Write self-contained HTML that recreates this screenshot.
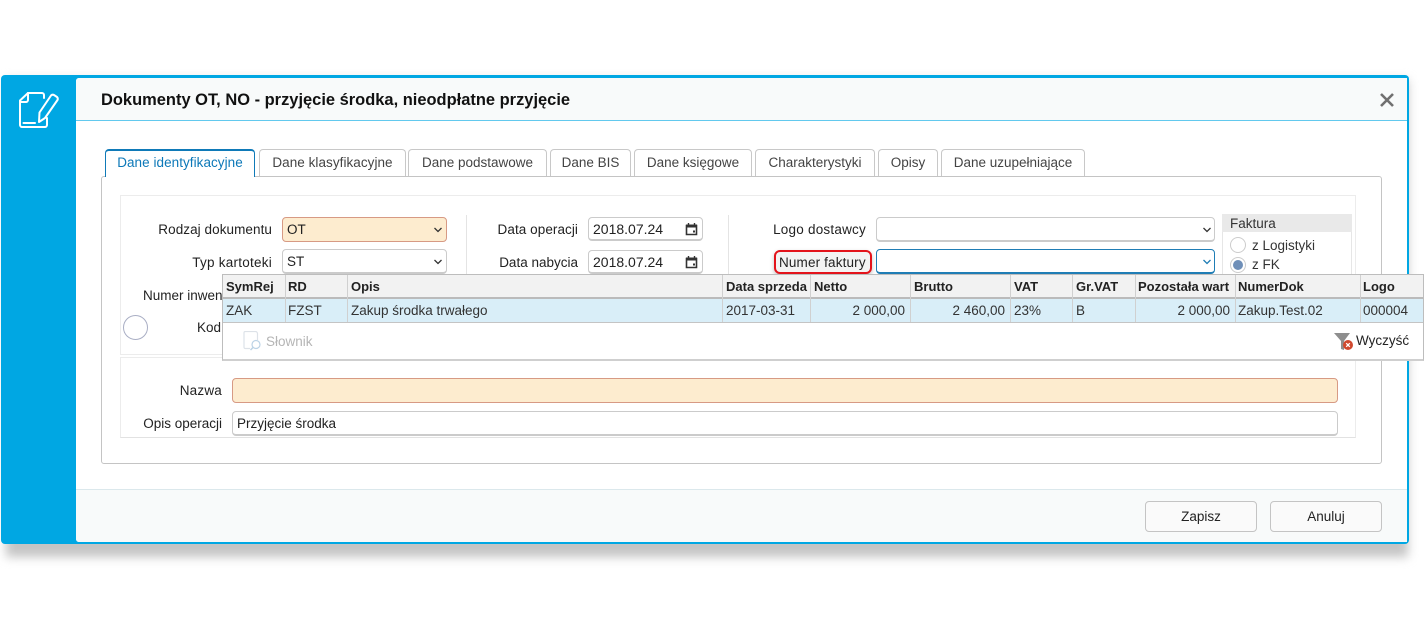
<!DOCTYPE html>
<html lang="pl"><head><meta charset="utf-8"><title>Dokumenty OT, NO</title>
<style>
html,body{margin:0;padding:0;background:#fff}
body{width:1424px;height:629px;position:relative;overflow:hidden;font-family:"Liberation Sans",sans-serif;font-size:13.5px;color:#222}
div,span,svg{position:absolute;box-sizing:border-box}
.t{white-space:nowrap;line-height:16px}
.r{text-align:right}
.tab{top:149px;height:27px;border:1px solid #c8c8c8;border-bottom:0;border-radius:4px 4px 0 0;background:#fff;color:#444;text-align:center;line-height:26px;white-space:nowrap}
.in{height:25px;background:#fff;border:1px solid #cbcbcb;border-bottom:2px solid #cbcbcb;border-radius:4px;padding-left:4px;line-height:23px;white-space:nowrap;color:#222}
.o{background:#fdeccf;border:1px solid #d79a84}
.ch{width:10px;height:6px}
.h{top:276px;height:22px;line-height:22px;padding-left:3px;font-weight:bold;color:#222;white-space:nowrap;overflow:hidden;font-size:13px}
.c{top:299px;height:23px;line-height:23px;padding:0 3px;white-space:nowrap;color:#333;font-size:13.5px}
.s{width:1px;background:#d0d0d0}
</style></head><body>
<div style="left:6px;top:80px;width:1402px;height:477px;background:#c4c4c4;filter:blur(5px)"></div>
<div style="left:1px;top:75px;width:1408px;height:469px;background:#00a7e3;border-radius:4px"></div>
<div style="left:76px;top:78px;width:1331px;height:464px;background:#fff;border-radius:3px 0 0 3px"></div>
<div style="left:76px;top:78px;width:1331px;height:43px;background:#f8fafa;border-bottom:1px solid #62c9ee;border-radius:3px 0 0 0"></div>
<div class="t" style="left:101px;top:90px;font-size:16.47px;line-height:20px;font-weight:bold;color:#111">Dokumenty OT, NO - przyjęcie środka, nieodpłatne przyjęcie</div>
<svg style="left:1379px;top:92px" width="16" height="16" viewBox="0 0 16 16"><path d="M2 2L14 14M14 2L2 14" stroke="#707070" stroke-width="2.600" fill="none"/></svg>
<svg style="left:16px;top:90px" width="44" height="40" viewBox="16 90 44 40" fill="none" stroke="#fff" stroke-width="2" stroke-linejoin="round" stroke-linecap="round"><path d="M28 93H42C43 93 44 94 44 95V98"/><path d="M28 93L20 100.500V125C20 126 21 127 22 127H45C46 127 47 126 47 125V118"/><path d="M28 93V100C28 101 27 102 26 102H20"/><path d="M23.500 123H35"/><path d="M39 122L39.500 112.500L51 95.500C52 94.500 53 94.500 54 95L57 97C58 98 58 99 57.500 100L45 118Z"/></svg>

<div style="left:76px;top:489px;width:1331px;height:53px;background:#f8fafa;border-top:1px solid #dbe8ec;border-radius:0 0 0 3px"></div>
<div class="tab" style="left:1145px;top:501px;width:112px;height:31px;border:1px solid #c4c4c4;border-radius:4px;background:#fafafa;color:#222;line-height:29px">Zapisz</div>
<div class="tab" style="left:1270px;top:501px;width:112px;height:31px;border:1px solid #c4c4c4;border-radius:4px;background:#fafafa;color:#222;line-height:29px">Anuluj</div>

<div style="left:101px;top:176px;width:1281px;height:288px;border:1px solid #c4c4c4;border-radius:3px;background:#fff"></div>
<div class="tab" style="left:105px;width:150px;height:28px;border:1px solid #0f7ab8;border-top-width:2px;border-bottom:0;color:#0c78b8;line-height:24px;z-index:2;letter-spacing:.05px">Dane identyfikacyjne</div>
<div class="tab" style="left:259px;width:147px;letter-spacing:.05px">Dane klasyfikacyjne</div>
<div class="tab" style="left:408px;width:139px">Dane podstawowe</div>
<div class="tab" style="left:550px;width:81px">Dane BIS</div>
<div class="tab" style="left:634px;width:118px">Dane księgowe</div>
<div class="tab" style="left:755px;width:120px">Charakterystyki</div>
<div class="tab" style="left:878px;width:60px">Opisy</div>
<div class="tab" style="left:941px;width:144px">Dane uzupełniające</div>

<div style="left:120px;top:195px;width:1236px;height:160px;border:1px solid #ececec"></div>
<div style="left:120px;top:357px;width:1236px;height:81px;border:1px solid #ececec;border-bottom-color:#e2e2e2"></div>
<div style="left:466px;top:215px;width:1px;height:60px;background:#e4e4e4"></div>
<div style="left:728px;top:215px;width:1px;height:60px;background:#e4e4e4"></div>

<div class="t r" style="right:1152px;top:222px;letter-spacing:.07px">Rodzaj dokumentu</div>
<div class="t r" style="right:1152px;top:255px;letter-spacing:.25px">Typ kartoteki</div>
<div class="t" style="left:143px;top:288px">Numer inwen</div>
<div class="t" style="left:197px;top:320px">Kod</div>
<div style="left:123px;top:315px;width:25px;height:25px;border:1px solid #a9aec4;border-radius:50%;background:#fff"></div>
<div class="in o" style="left:282px;top:217px;width:165px">OT</div>
<div class="in" style="left:282px;top:249px;width:165px">ST</div>
<svg class="ch" style="left:433px;top:227px" viewBox="0 0 10 6"><path d="M1.500 1L5 4.500L8.500 1" stroke="#333" stroke-width="1.300" fill="none"/></svg>
<svg class="ch" style="left:433px;top:259px" viewBox="0 0 10 6"><path d="M1.500 1L5 4.500L8.500 1" stroke="#333" stroke-width="1.300" fill="none"/></svg>

<div class="t r" style="right:846px;top:222px;letter-spacing:.07px">Data operacji</div>
<div class="t r" style="right:846px;top:255px">Data nabycia</div>
<div class="in" style="left:588px;top:217px;width:115px;height:24px;font-size:14px">2018.07.24</div>
<div class="in" style="left:588px;top:250px;width:115px;height:24px;font-size:14px">2018.07.24</div>
<svg style="left:685px;top:222px" width="13" height="14" viewBox="0 0 13 14"><path d="M1.500 3.500H11.500V12.500H1.500Z" fill="#fff" stroke="#333" stroke-width="1.600"/><path d="M1 2.500H12V5.500H1Z" fill="#333"/><path d="M3.500 1V3M9.500 1V3" stroke="#333" stroke-width="1.400"/><rect x="8" y="8.500" width="2" height="2" fill="#333"/></svg>
<svg style="left:685px;top:255px" width="13" height="14" viewBox="0 0 13 14"><path d="M1.500 3.500H11.500V12.500H1.500Z" fill="#fff" stroke="#333" stroke-width="1.600"/><path d="M1 2.500H12V5.500H1Z" fill="#333"/><path d="M3.500 1V3M9.500 1V3" stroke="#333" stroke-width="1.400"/><rect x="8" y="8.500" width="2" height="2" fill="#333"/></svg>

<div class="t r" style="right:558px;top:222px;letter-spacing:.22px">Logo dostawcy</div>
<div style="left:774px;top:250px;width:98px;height:24px;border:2px solid #e3131b;border-radius:6px;background:#f3f3f3;box-shadow:0 2px 4px rgba(0,0,0,.25)"></div>
<div class="t" style="left:779px;top:255px;letter-spacing:.15px">Numer faktury</div>
<div class="in" style="left:876px;top:217px;width:339px"></div>
<div class="in" style="left:876px;top:249px;width:339px;border:1px solid #1f7db5;border-bottom:2px solid #1f7db5"></div>
<svg class="ch" style="left:1202px;top:227px" viewBox="0 0 10 6"><path d="M1.500 1L5 4.500L8.500 1" stroke="#333" stroke-width="1.300" fill="none"/></svg>
<svg class="ch" style="left:1202px;top:259px" viewBox="0 0 10 6"><path d="M1.500 1L5 4.500L8.500 1" stroke="#1f7db5" stroke-width="1.300" fill="none"/></svg>

<div style="left:1222px;top:214px;width:130px;height:62px;border:1px solid #e6e6e6"></div>
<div style="left:1222px;top:214px;width:130px;height:18px;background:#e9e9e9"></div>
<div class="t" style="left:1230px;top:216px;color:#333">Faktura</div>
<div style="left:1230px;top:237px;width:16px;height:16px;border:1px solid #cccccc;border-radius:50%;background:#fff"></div>
<div style="left:1230px;top:257px;width:16px;height:16px;border:1px solid #cccccc;border-radius:50%;background:#fff"></div>
<div style="left:1233px;top:260px;width:10px;height:10px;border-radius:50%;background:#6f8fb8"></div>
<div class="t" style="left:1252px;top:238px;color:#333">z Logistyki</div>
<div class="t" style="left:1252px;top:257px;color:#333">z FK</div>

<div class="t r" style="right:1202px;top:383px;letter-spacing:.2px">Nazwa</div>
<div class="t r" style="right:1202px;top:416px">Opis operacji</div>
<div class="in o" style="left:232px;top:378px;width:1106px"></div>
<div class="in" style="left:232px;top:411px;width:1106px">Przyjęcie środka</div>

<!-- dropdown grid -->
<div style="left:222px;top:274px;width:1202px;height:87px;background:#fff;border:1px solid #bdbdbd;border-bottom:2px solid #cfcfcf"></div>
<div style="left:223px;top:275px;width:1200px;height:22px;background:#f2f2f2"></div>
<div style="left:223px;top:297px;width:1200px;height:2px;background:#bbb"></div>
<div style="left:223px;top:299px;width:1200px;height:23px;background:#d9eef8"></div>
<div style="left:223px;top:322px;width:1200px;height:1px;background:#c4c4c4"></div>
<div class="s" style="left:285px;top:275px;height:47px"></div>
<div class="s" style="left:347px;top:275px;height:47px"></div>
<div class="s" style="left:722px;top:275px;height:47px"></div>
<div class="s" style="left:810px;top:275px;height:47px"></div>
<div class="s" style="left:910px;top:275px;height:47px"></div>
<div class="s" style="left:1010px;top:275px;height:47px"></div>
<div class="s" style="left:1072px;top:275px;height:47px"></div>
<div class="s" style="left:1135px;top:275px;height:47px"></div>
<div class="s" style="left:1235px;top:275px;height:47px"></div>
<div class="s" style="left:1360px;top:275px;height:47px"></div>
<div class="h" style="left:223px">SymRej</div>
<div class="h" style="left:285px">RD</div>
<div class="h" style="left:348px">Opis</div>
<div class="h" style="left:723px;width:87px">Data sprzeda</div>
<div class="h" style="left:811px">Netto</div>
<div class="h" style="left:911px">Brutto</div>
<div class="h" style="left:1011px">VAT</div>
<div class="h" style="left:1073px">Gr.VAT</div>
<div class="h" style="left:1135px;width:100px">Pozostała wart</div>
<div class="h" style="left:1235px">NumerDok</div>
<div class="h" style="left:1360px">Logo</div>
<div class="c" style="left:223px">ZAK</div>
<div class="c" style="left:285px">FZST</div>
<div class="c" style="left:348px">Zakup środka trwałego</div>
<div class="c" style="left:723px">2017-03-31</div>
<div class="c r" style="left:811px;width:97px">2 000,00</div>
<div class="c r" style="left:911px;width:97px">2 460,00</div>
<div class="c" style="left:1011px">23%</div>
<div class="c" style="left:1073px">B</div>
<div class="c r" style="left:1136px;width:97px">2 000,00</div>
<div class="c" style="left:1235px">Zakup.Test.02</div>
<div class="c" style="left:1360px">000004</div>
<svg style="left:243px;top:331px" width="20" height="20" viewBox="0 0 20 20" fill="none" stroke="#dde2e8" stroke-width="1.200"><path d="M2.500 .5H12.500C13.500 .5 14.500 1.500 14.500 2.500V9M7 17.500H2.500C1.500 17.500 1 17 1 16V2C1 1 1.500 .5 2.500 .5"/><circle cx="13" cy="13.500" r="4" stroke="#bcd3e6"/><path d="M10 16.500L7.500 19" stroke="#bcd3e6" stroke-width="1.500"/></svg>
<div class="t" style="left:266px;top:334px;color:#b5b5b5">Słownik</div>
<svg style="left:1334px;top:333px" width="20" height="18" viewBox="0 0 20 18"><path d="M0 0H16L10 8V17L7 16V8Z" fill="#8e8e8e"/><circle cx="14" cy="12" r="5" fill="#d0492f"/><path d="M12.200 10.200L15.800 13.800M15.800 10.200L12.200 13.800" stroke="#fff" stroke-width="1.300"/></svg>
<div class="t" style="left:1356px;top:333px;color:#222">Wyczyść</div>
</body></html>
